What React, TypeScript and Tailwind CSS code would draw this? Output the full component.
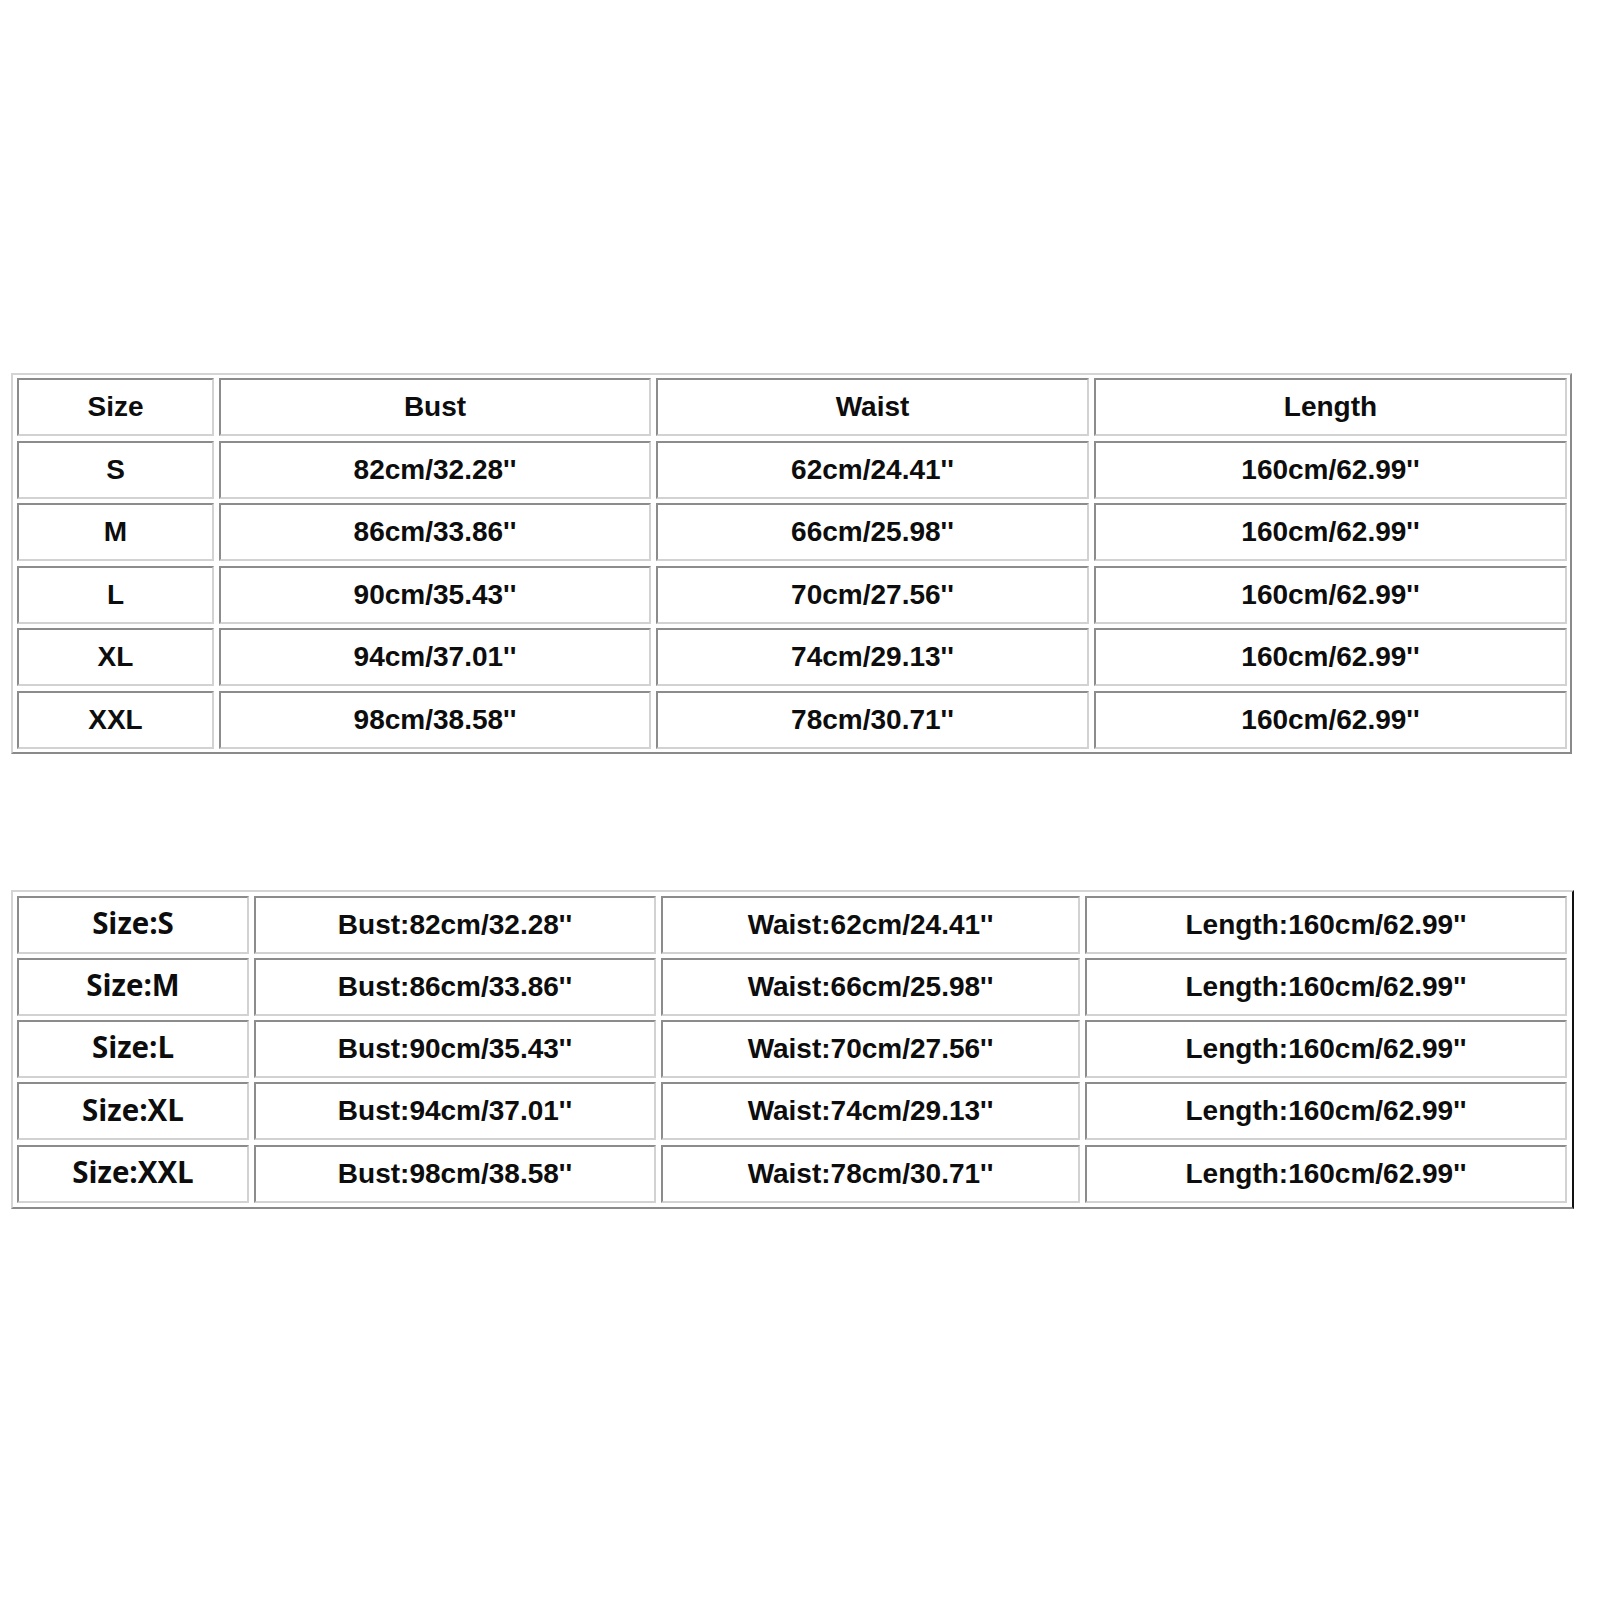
import React from 'react';

const sizes = ['S', 'M', 'L', 'XL', 'XXL'];
const bust = ['82cm/32.28\'\'', '86cm/33.86\'\'', '90cm/35.43\'\'', '94cm/37.01\'\'', '98cm/38.58\'\''];
const waist = ['62cm/24.41\'\'', '66cm/25.98\'\'', '70cm/27.56\'\'', '74cm/29.13\'\'', '78cm/30.71\'\''];
const length = '160cm/62.99\'\'';

const cellCls =
  'flex items-center justify-center border-2 border-t-[#8c8c8c] border-l-[#8c8c8c] border-b-[#d2d2d2] border-r-[#d2d2d2] bg-white';

const Cell: React.FC<{ children: React.ReactNode; alt?: boolean }> = ({ children, alt }) => (
  <div className={`${cellCls} h-[58px]`}>
    <span
      className={
        alt
          ? "font-['Open_Sans',sans-serif] text-[29.5px] font-bold text-[#0d0d0d] leading-none -translate-y-[2px]"
          : "font-['Liberation_Sans',Arial,sans-serif] text-[28px] font-bold text-[#0d0d0d] leading-none"
      }
    >
      {children}
    </span>
  </div>
);

export default function App() {
  return (
    <div className="w-[1600px] h-[1600px] bg-white pt-[373px] pl-[11px]">
      {/* first chart: plain values */}
      <div className="w-[1561px] border-2 border-t-[#d4d4d4] border-l-[#d4d4d4] border-b-[#8a8a8a] border-r-[#8a8a8a] p-[3px] pl-[4px]">
        <div className="grid grid-cols-[197px_432px_433px_473px] gap-x-[5px] gap-y-[4.5px]">
          <Cell>Size</Cell>
          <Cell>Bust</Cell>
          <Cell>Waist</Cell>
          <Cell>Length</Cell>
          {sizes.map((s, i) => (
            <React.Fragment key={s}>
              <Cell>{s}</Cell>
              <Cell>{bust[i]}</Cell>
              <Cell>{waist[i]}</Cell>
              <Cell>{length}</Cell>
            </React.Fragment>
          ))}
        </div>
      </div>

      {/* second chart: labelled values */}
      <div className="mt-[136px] w-[1563px] border-2 border-t-[#d4d4d4] border-l-[#d4d4d4] border-b-[#8a8a8a] border-r-[#111] p-[4px] pl-[4px] pb-[4px]">
        <div className="grid grid-cols-[232px_402px_419px_482px] gap-x-[5px] gap-y-[4.3px]">
          {sizes.map((s, i) => (
            <React.Fragment key={s}>
              <Cell alt>Size:{s}</Cell>
              <Cell>Bust:{bust[i]}</Cell>
              <Cell>Waist:{waist[i]}</Cell>
              <Cell>Length:{length}</Cell>
            </React.Fragment>
          ))}
        </div>
      </div>
    </div>
  );
}
